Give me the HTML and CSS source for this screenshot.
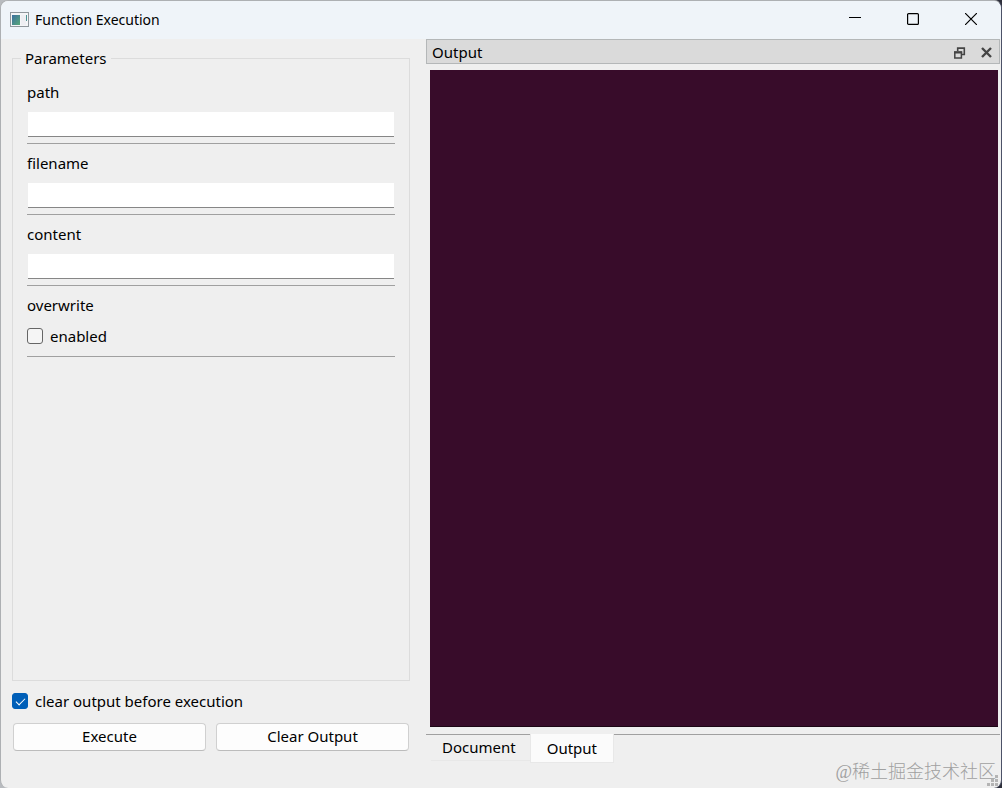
FILE: index.html
```html
<!DOCTYPE html>
<html lang="en">
<head>
<meta charset="utf-8">
<title>Function Execution</title>
<link rel="stylesheet" href="styles.css">
</head>
<body>
<div class="window">
  <header class="titlebar">
    <svg class="app-icon" width="19" height="16" viewBox="0 0 19 16" aria-hidden="true">
      <defs><linearGradient id="g" x1="0" y1="0" x2="1" y2="1"><stop offset="0" stop-color="#3c6fa0"/><stop offset="1" stop-color="#58a878"/></linearGradient></defs>
      <rect x=".5" y=".5" width="18" height="14" fill="#f4f5f7" stroke="#90979c"/>
      <rect x="2" y="3" width="8" height="10" fill="url(#g)"/>
      <rect x="11" y="3" width="5" height="10" fill="#eeeef2"/>
      <rect x="16" y="3" width="1" height="6" fill="#4c9494"/>
    </svg>
    <h1 class="title">Function Execution</h1>
    <button class="win-button" type="button" aria-label="Minimize"><svg width="12" height="12" viewBox="0 0 12 12"><path d="M0 4.5H12" stroke="#000"/></svg></button>
    <button class="win-button" type="button" aria-label="Maximize"><svg width="12" height="12" viewBox="0 0 12 12"><rect x=".6" y=".6" width="10.8" height="10.8" rx="1" fill="none" stroke="#000" stroke-width="1.2"/></svg></button>
    <button class="win-button" type="button" aria-label="Close"><svg width="12" height="12" viewBox="0 0 12 12"><path d="M0 0L12 12M12 0L0 12" stroke="#000" stroke-width="1.2"/></svg></button>
  </header>
  <main class="content">
    <form class="panel">
      <fieldset class="group">
        <legend class="legend">Parameters</legend>
        <div class="field"><label class="label" for="path">path</label><input class="text" id="path" type="text"></div>
        <div class="field"><label class="label" for="filename">filename</label><input class="text" id="filename" type="text"></div>
        <div class="field"><label class="label" for="content">content</label><input class="text" id="content" type="text"></div>
        <div class="field"><span class="label">overwrite</span><label class="option"><input class="check" type="checkbox">enabled</label></div>
      </fieldset>
      <label class="option clear-option"><input class="check" type="checkbox" checked>clear output before execution</label>
      <div class="actions">
        <button class="button" type="button">Execute</button>
        <button class="button" type="button">Clear Output</button>
      </div>
    </form>
    <section class="dock">
      <div class="dock-title">
        <h2 class="dock-name">Output</h2>
        <button class="dock-button" type="button" aria-label="Float"><svg width="12" height="12" viewBox="0 0 12 12"><path d="M3.7 4V1H10.3V7.5H8M3 1.2H11" fill="none" stroke="#444" stroke-width="1.6"/><rect x=".8" y="5" width="6.6" height="6" fill="#dadada" stroke="#444" stroke-width="1.5"/><path d="M0 5.4H8.2" stroke="#444" stroke-width="2"/></svg></button>
        <button class="dock-button" type="button" aria-label="Close output"><svg width="11" height="11" viewBox="0 0 11 11"><path d="M1 1L10 10M10 1L1 10" stroke="#444" stroke-width="2.4"/></svg></button>
      </div>
      <div class="console" role="log"></div>
      <div class="tabs" role="tablist">
        <button class="tab" type="button" role="tab" aria-selected="false">Document</button>
        <button class="tab tab-active" type="button" role="tab" aria-selected="true">Output</button>
      </div>
    </section>
  </main>
  <div class="watermark" lang="zh-CN">@稀土掘金技术社区</div>
  <svg class="grip" width="12" height="12" viewBox="0 0 12 12" aria-hidden="true"><path d="M8 0h3v3h-3zM4 4h3v3h-3zM8 4h3v3h-3zM0 8h3v3h-3zM4 8h3v3h-3zM8 8h3v3h-3z" fill="#b4b4b4"/></svg>
</div>
</body>
</html>
```
FILE: styles.css
```css
* { box-sizing: border-box; }

body {
  margin: 0;
  background: linear-gradient(90deg, #b8bbbf 50%, #2e303c 50%);
  color: #000;
  font: 15px/24px "Noto Sans", "Open Sans", sans-serif;
}

button, input { font: inherit; color: inherit; }

button { padding: 0; border: 0; background: none; }

.window {
  position: relative;
  display: flex;
  flex-direction: column;
  height: 100vh;
  border: 1px solid #adb0b3;
  border-right-color: #4c5268;
  border-bottom: 0;
  border-radius: 8px;
  background: #efefef;
  overflow: hidden;
}

.titlebar {
  display: flex;
  align-items: center;
  height: 38px;
  padding: 0 1px 0 9px;
  background: #eff4f9;
}

.title {
  flex: 1;
  margin: 0 0 0 6px;
  font-size: 14px;
  font-weight: 400;
}

.win-button {
  display: grid;
  place-items: center;
  width: 58px;
  height: 38px;
  padding-bottom: 2px;
}

.content {
  flex: 1;
  display: grid;
  grid-template-columns: minmax(0, 398fr) minmax(0, 574fr);
  gap: 16px;
  padding: 0 1px 0 11px;
}

.panel {
  display: flex;
  flex-direction: column;
  padding: 7px 0 37px;
}

.group {
  flex: 1;
  margin: 0;
  padding: 3px 14px;
  border: 1px solid #dcdcdc;
}

.legend {
  margin-left: -6px;
  padding: 0 4px;
}

.field {
  display: flex;
  flex-direction: column;
  height: 71px;
  padding-top: 7px;
  border-bottom: 1px solid #a0a0a0;
}

.text {
  height: 25px;
  margin: 8px 1px 0;
  padding: 0 4px;
  border: 0;
  border-bottom: 1px solid #868686;
  background: #fff;
}

.option {
  display: flex;
  align-items: center;
  gap: 7px;
}

.field .option { margin-top: 7px; }

.check {
  appearance: none;
  width: 16px;
  height: 16px;
  margin: 0;
  border: 1px solid #666;
  border-radius: 3px;
  background: #f5f5f5;
}

.check:checked {
  display: grid;
  place-items: center;
  border-color: #005fb8;
  background: #005fb8;
}

.check:checked::before {
  content: "";
  width: 8px;
  height: 4px;
  margin-bottom: 2px;
  border: solid #fff;
  border-width: 0 0 1px 1px;
  transform: rotate(-45deg);
}

.clear-option { margin: 8px 0 10px; }

.actions {
  display: grid;
  grid-template-columns: 1fr 1fr;
  gap: 10px;
  padding: 0 1px;
}

.button {
  height: 28px;
  padding-bottom: 2px;
  border: 1px solid #d0d0d0;
  border-bottom-color: #bcbcbc;
  border-radius: 4px;
  background: #fdfdfd;
}

.dock {
  display: flex;
  flex-direction: column;
  padding-bottom: 25px;
}

.dock-title {
  display: flex;
  align-items: center;
  gap: 15px;
  height: 25px;
  padding: 0 7px 0 5px;
  border: 1px solid #b4b7b8;
  background: #dadada;
}

.dock-name {
  flex: 1;
  margin: 0;
  font-size: 15px;
  font-weight: 400;
}

.dock-button {
  display: grid;
  padding-top: 2px;
}

.console {
  flex: 1;
  margin: 6px 2px 7px 4px;
  background: #380c2a;
  border-bottom: 1px solid #1c0615;
}

.tabs {
  display: flex;
  align-items: flex-start;
  padding-left: 5px;
  background: linear-gradient(#a0a0a0, #a0a0a0) 0 0 / 100% 1px no-repeat;
}

.tab {
  height: 27px;
  padding: 0 14px 0 11px;
  border: solid #e8e8e8;
  border-width: 0 0 1px;
}

.tab-active {
  height: 29px;
  padding: 0 16px;
  border-width: 0 1px 1px;
  background: #fbfbfb;
}

.watermark {
  position: absolute;
  right: 5px;
  bottom: 4px;
  color: #a0a0a0;
  font: 18px/24px "Liberation Serif", "Noto Sans CJK SC", serif;
  font-weight: 300;
}

.grip {
  position: absolute;
  right: 2px;
  bottom: 1px;
}
```
